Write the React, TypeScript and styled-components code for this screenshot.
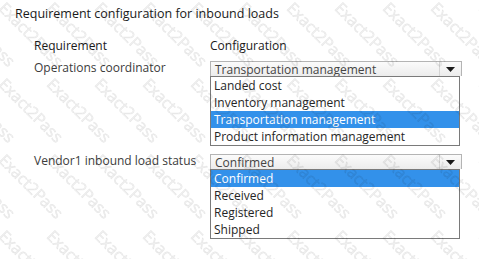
import React from "react";
import styled, { createGlobalStyle } from "styled-components";

const text_color: string = "#262626";
const highlight_color: string = "#3391ea";

const GlobalStyle = createGlobalStyle`
  html, body {
    margin: 0;
    padding: 0;
    background: #ffffff;
  }
  body {
    font-family: "Open Sans", "Noto Sans", sans-serif;
    color: ${text_color};
  }
`;

const rows = [
  {
    label: "Operations coordinator",
    value: "Transportation management",
    options: [
      "Landed cost",
      "Inventory management",
      "Transportation management",
      "Product information management",
    ],
  },
  {
    label: "Vendor1 inbound load status",
    value: "Confirmed",
    options: ["Confirmed", "Received", "Registered", "Shipped"],
  },
];

function Dropdown(props) {
  return (
    <DropdownPane>
      <SelectBox>
        <SelectValue>{props.value}</SelectValue>
        <ArrowButton>
          <svg width="9" height="5" viewBox="0 0 9 5">
            <path d="M0 0 L9 0 L4.5 5 Z" fill="#1a1a1a" />
          </svg>
        </ArrowButton>
      </SelectBox>
      <OptionList>
        {props.options.map((o) => (
          <OptionItem key={o} selected={o === props.value}>
            {o}
          </OptionItem>
        ))}
      </OptionList>
    </DropdownPane>
  );
}

// diagonal "Exact2Pass" stamp repeated over the whole shot
function Watermark() {
  const marks = [];
  for (let r = 0; r < 5; r++) {
    for (let c = -2; c < 11; c++) {
      marks.push(
        <WatermarkWord
          key={r + "-" + c}
          style={{ left: 2 + c * 48, top: -3 + r * 76 }}
        >
          Exact2Pass
        </WatermarkWord>
      );
    }
  }
  return <WatermarkLayer aria-hidden="true">{marks}</WatermarkLayer>;
}

export default function App() {
  return (
    <Page>
      <GlobalStyle />
      <Title>Requirement configuration for inbound loads</Title>
      <Table>
        <HeaderCell>Requirement</HeaderCell>
        <HeaderCell>Configuration</HeaderCell>
        {rows.map((row) => (
          <React.Fragment key={row.label}>
            <LabelCell>{row.label}</LabelCell>
            <Dropdown value={row.value} options={row.options} />
          </React.Fragment>
        ))}
      </Table>
      <Watermark />
    </Page>
  );
}

const Page = styled.div`
  position: relative;
  width: 479px;
  height: 259px;
  overflow: hidden;
  padding: 6px 0 0 15px;
  box-sizing: border-box;
`;

const Title = styled.div`
  font-size: 12.5px;
  line-height: 16px;
  color: #1a1a1a;
`;

const Table = styled.div`
  display: grid;
  grid-template-columns: 176px 252px;
  row-gap: 5px;
  margin: 16px 0 0 19px;
  font-size: 12px;
  line-height: 16px;
`;

const HeaderCell = styled.div`
  color: #1a1a1a;
`;

const LabelCell = styled.div`
  color: #3c3c3c;
  padding-top: 1px;
`;

const DropdownPane = styled.div`
  display: flex;
  flex-direction: column;
  margin-bottom: 1px;
`;

const SelectBox = styled.div`
  display: flex;
  height: 14px;
  margin-top: 2px;
  border: 1px solid #b4b4b4;
  border-bottom: none;
  background: linear-gradient(#fbfbfb, #ececec);
  overflow: hidden;
`;

const SelectValue = styled.div`
  flex: 1;
  height: 14px;
  padding: 1px 0 0 4px;
  box-sizing: border-box;
  line-height: 14px;
  color: #444;
  white-space: nowrap;
  overflow: hidden;
`;

const ArrowButton = styled.div`
  width: 21px;
  display: flex;
  align-items: center;
  justify-content: center;
  border-left: 1px solid #d4d4d4;
`;

const OptionList = styled.div`
  display: flex;
  flex-direction: column;
  border: 1px solid #7a7a7a;
  background: #ffffff;
  margin-right: 2px;
`;

const OptionItem = styled.div<{ selected?: boolean }>`
  height: 17px;
  line-height: 17px;
  padding-left: 3px;
  white-space: nowrap;
  background: ${(p) => (p.selected ? highlight_color : "transparent")};
  color: ${(p) => (p.selected ? "#ffffff" : text_color)};
`;

const WatermarkLayer = styled.div`
  position: absolute;
  inset: 0;
  pointer-events: none;
  mix-blend-mode: multiply;
`;

const WatermarkWord = styled.span`
  position: absolute;
  font-family: "Open Sans", sans-serif;
  font-size: 16px;
  line-height: 16px;
  color: rgba(150, 150, 150, 0.12);
  -webkit-text-stroke: 0.5px rgba(140, 140, 140, 0.18);
  transform: rotate(45deg);
  transform-origin: 0 50%;
  white-space: nowrap;
`;
